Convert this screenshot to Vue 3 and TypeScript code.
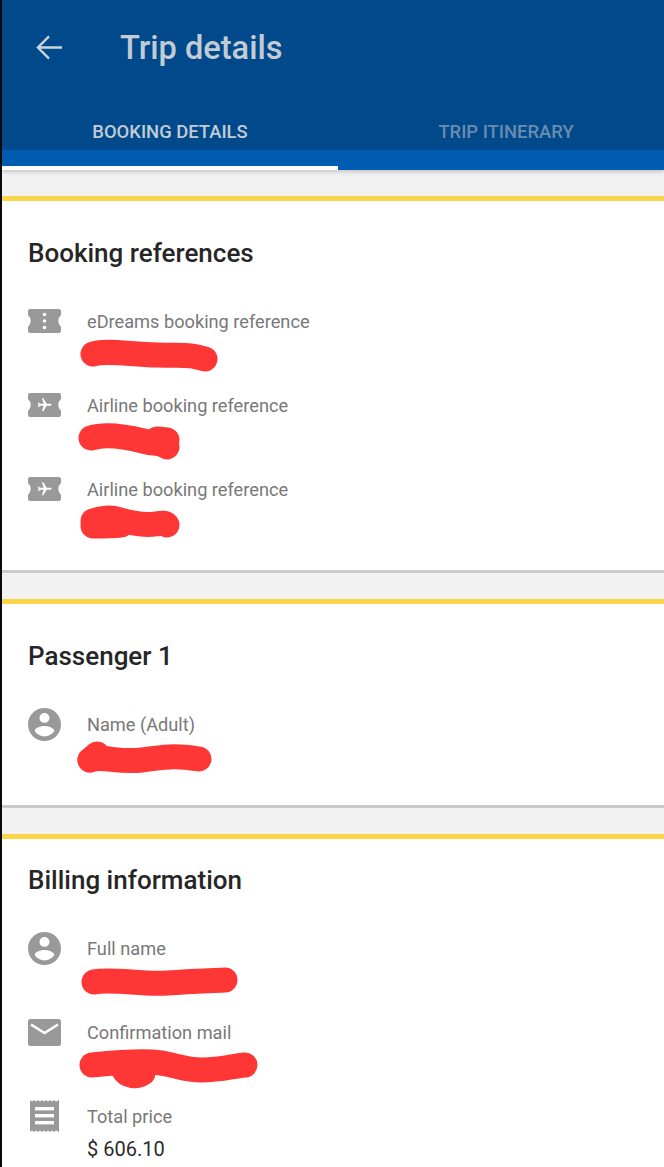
<template>
  <div class="screen">
    <header class="topbar">
      <div class="toolbar">
        <svg class="back" viewBox="0 0 30 30" aria-hidden="true">
          <path d="M28 15H3M14.5 3.5 3 15l11.5 11.5" />
        </svg>
        <h1 class="title">Trip details</h1>
      </div>
      <div class="tabs">
        <div class="tab tab--active">BOOKING DETAILS</div>
        <div class="tab">TRIP ITINERARY</div>
      </div>
      <div class="tabstrip"><span class="indicator"></span></div>
    </header>

    <section v-for="section in sections" :key="section.title" class="card" :class="section.cls">
      <h2 class="card-title">{{ section.title }}</h2>
      <div class="rows">
        <div v-for="row in section.rows" :key="row.label" class="row">
          <div class="row-icon">
            <svg v-if="row.icon === 'ticket' || row.icon === 'flight'" class="ico-ticket" viewBox="0 0 33 24">
              <path fill="#999" d="M2 0h29a2 2 0 0 1 2 2v4a8 8 0 0 0 0 12v4a2 2 0 0 1-2 2H2a2 2 0 0 1-2-2v-4a8 8 0 0 0 0-12V2a2 2 0 0 1 2-2z" />
              <template v-if="row.icon === 'ticket'">
                <circle cx="16.5" cy="5.5" r="1.8" fill="#fff" />
                <circle cx="16.5" cy="12" r="1.8" fill="#fff" />
                <circle cx="16.5" cy="18.5" r="1.8" fill="#fff" />
              </template>
              <path
                v-else
                fill="#fff"
                transform="translate(8.5 4) scale(.68) rotate(90 12 12)"
                d="M21 16v-2l-8-5V3.5c0-.83-.67-1.5-1.5-1.5S10 2.67 10 3.5V9l-8 5v2l8-2.5V19l-2 1.5V22l3.5-1 3.5 1v-1.5L13 19v-5.5l8 2.5z"
              />
            </svg>
            <svg v-else-if="row.icon === 'person'" class="ico-person" viewBox="2 2 20 20">
              <path fill="#999" d="M12 2C6.48 2 2 6.48 2 12s4.48 10 10 10 10-4.48 10-10S17.52 2 12 2zm0 3c1.66 0 3 1.34 3 3s-1.34 3-3 3-3-1.34-3-3 1.34-3 3-3zm0 14.2c-2.5 0-4.71-1.28-6-3.22.03-1.99 4-3.08 6-3.08 1.99 0 5.97 1.09 6 3.08-1.29 1.94-3.5 3.22-6 3.22z" />
            </svg>
            <svg v-else-if="row.icon === 'mail'" class="ico-mail" viewBox="0 0 33 27">
              <rect width="33" height="27" rx="2.5" fill="#999" />
              <path d="M3 5.5 16.5 14 30 5.5" fill="none" stroke="#fff" stroke-width="2.6" />
            </svg>
            <svg v-else class="ico-receipt" viewBox="0 0 29 32">
              <path fill="#999" d="M0 0l2 1.5L4 0l2 1.5L8 0l2 1.5L12 0l2 1.5L16 0l2 1.5L20 0l2 1.5L24 0l2 1.5L29 0v32l-3-1.5L24 32l-2-1.5L20 32l-2-1.5L16 32l-2-1.5L12 32l-2-1.5L8 32l-2-1.5L4 32l-2-1.5L0 32z" />
              <rect x="5" y="7" width="19" height="3.4" fill="#fff" />
              <rect x="5" y="14" width="19" height="3.4" fill="#fff" />
              <rect x="5" y="21" width="19" height="3.4" fill="#fff" />
            </svg>
          </div>
          <div class="row-body">
            <div class="row-label">{{ row.label }}</div>
            <div v-if="row.value" class="row-value">{{ row.value }}</div>
            <svg v-else class="scribble" viewBox="0 0 200 24">
              <path v-for="(d, i) in row.scribble" :key="i" :d="d" />
            </svg>
          </div>
        </div>
      </div>
    </section>
  </div>
</template>

<script setup lang="ts">
interface Row {
  icon: 'ticket' | 'flight' | 'person' | 'mail' | 'receipt'
  label: string
  value?: string
  scribble?: string[]
}

interface Section {
  title: string
  cls?: string
  rows: Row[]
}

// scribbles hide the personal data, coordinates are local to the value line
const sections: Section[] = [
  {
    title: 'Booking references',
    rows: [
      { icon: 'ticket', label: 'eDreams booking reference', scribble: ['M6 12C20 8 40 12 70 13S100 12 118 17'] },
      { icon: 'flight', label: 'Airline booking reference', scribble: ['M4 12C20 7 40 11 56 15S72 16 80 21', 'M70 13L80 14'] },
      { icon: 'flight', label: 'Airline booking reference', scribble: ['M6 11C14 8 24 7 30 9S55 16 68 14 78 14 80 15', 'M6 16C14 16 24 16 34 15'] }
    ]
  },
  {
    title: 'Passenger 1',
    rows: [
      { icon: 'person', label: 'Name (Adult)', scribble: ['M3 15C15 10 30 18 55 15S85 10 112 14', 'M10 9L3 15'] }
    ]
  },
  {
    title: 'Billing information',
    cls: 'card--billing',
    rows: [
      { icon: 'person', label: 'Full name', scribble: ['M7 13C25 9 55 16 80 14S115 12 138 11'] },
      { icon: 'mail', label: 'Confirmation mail', scribble: ['M5 12C25 10 45 8 65 9S95 17 115 17 145 13 158 12', 'M36 16C40 24 50 24 56 20'] },
      { icon: 'receipt', label: 'Total price', value: '$ 606.10' }
    ]
  }
]
</script>

<style>
html,
body {
  margin: 0;
  background: #f2f2f2;
}
</style>

<style scoped>
.screen {
  width: 664px;
  height: 1167px;
  box-sizing: border-box;
  border-left: 2px solid #0a0a0a;
  overflow: hidden;
  background: #f2f2f2;
  font-family: Roboto, "Liberation Sans", sans-serif;
}

.topbar {
  background: #004a8b;
  box-shadow: 0 2px 4px rgba(0, 0, 0, 0.18);
}

.toolbar {
  height: 94px;
  display: flex;
  align-items: center;
  padding-left: 33px;
}

.back {
  width: 29px;
  height: 29px;
  fill: none;
  stroke: #ccd3da;
  stroke-width: 2.4;
}

.title {
  margin: 2px 0 0 56px;
  font-size: 32.6px;
  font-weight: 500;
  color: #c3ccd5;
}

.tabs {
  height: 56px;
  display: flex;
}

.tab {
  flex: 0 0 336px;
  padding-top: 26px;
  box-sizing: border-box;
  text-align: center;
  font-size: 18.4px;
  font-weight: 500;
  line-height: 24px;
  color: #6a8cb0;
}

.tab--active {
  color: #c3ccd5;
}

.tabstrip {
  height: 20px;
  background: #005cb0;
  position: relative;
}

.indicator {
  position: absolute;
  left: 0;
  bottom: 0;
  width: 336px;
  height: 4px;
  background: #fff;
}

.card {
  margin-top: 26px;
  background: #fff;
  border-top: 5px solid #fad549;
  border-bottom: 3px solid #cbcbcb;
  padding: 36px 0 36px 26px;
}

.card--billing {
  padding-top: 25px;
}

.card-title {
  margin: 0 0 41px;
  font-size: 26px;
  font-weight: 500;
  line-height: 32px;
  color: #262626;
}

.rows {
  display: flex;
  flex-direction: column;
  gap: 28px;
}

.row {
  display: flex;
}

.row-icon {
  width: 33px;
  height: 24px;
  margin-top: -1px;
  margin-right: 26px;
  display: flex;
  align-items: center;
  justify-content: center;
  flex-shrink: 0;
}

.ico-ticket {
  width: 33px;
  height: 24px;
  flex-shrink: 0;
}

.ico-person {
  width: 33px;
  height: 33px;
  flex-shrink: 0;
}

.ico-mail {
  width: 33px;
  height: 27px;
  flex-shrink: 0;
}

.ico-receipt {
  width: 29px;
  height: 32px;
  flex-shrink: 0;
}

.row-label {
  font-size: 18.2px;
  line-height: 24px;
  color: #787878;
}

.row-value {
  margin-top: 8px;
  font-size: 20px;
  line-height: 24px;
  color: #2b2b2b;
}

.scribble {
  display: block;
  margin-top: 8px;
  width: 200px;
  height: 24px;
  overflow: visible;
  fill: none;
  stroke: #ff3636;
  stroke-width: 25;
  stroke-linecap: round;
  stroke-linejoin: round;
}
</style>
